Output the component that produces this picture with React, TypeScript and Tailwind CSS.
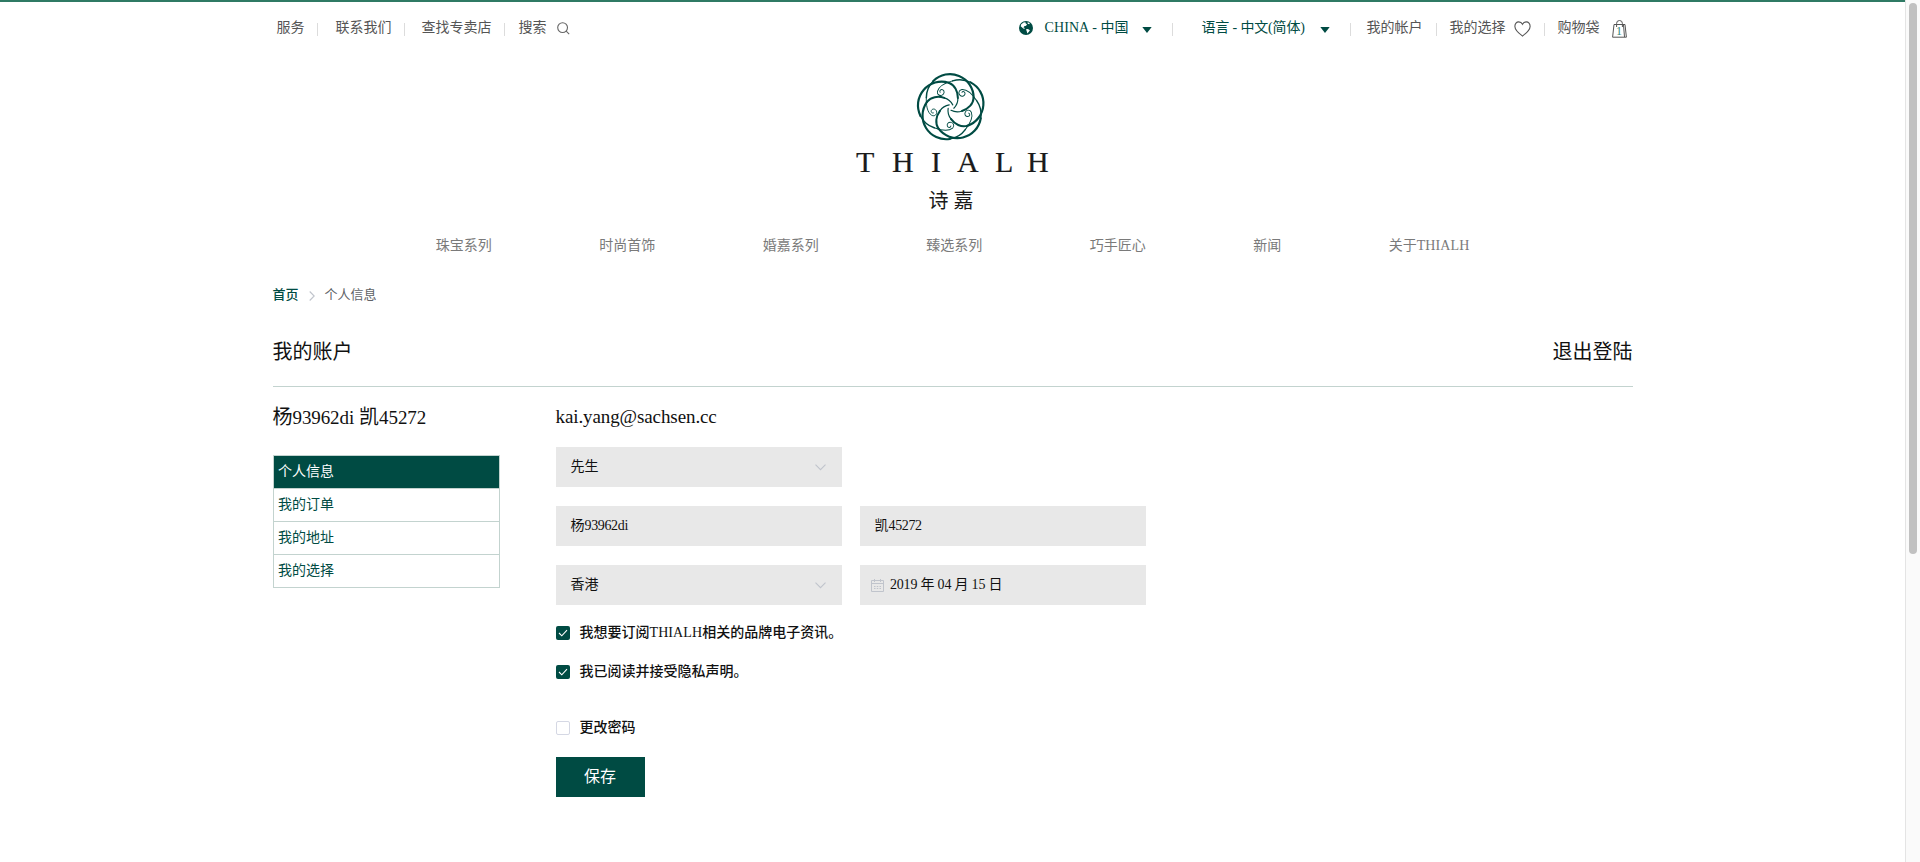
import React from "react";

const SERIF = "font-['Liberation_Serif','Noto_Sans_CJK_SC',serif]";

const navItems = ["珠宝系列", "时尚首饰", "婚嘉系列", "臻选系列", "巧手匠心", "新闻"];
const sideItems = ["个人信息", "我的订单", "我的地址", "我的选择"];
const petals = [0, 72, 144, 216, 288];

function Sep() {
  return <span className="mt-[3px] h-[13px] w-px shrink-0 bg-[#dcdcdc]" />;
}

function Caret() {
  return (
    <svg className="mt-[3px] h-[6px] w-[10px] shrink-0" viewBox="0 0 10 6">
      <path d="M.3 0h9.400L5 6z" fill="#004b43" />
    </svg>
  );
}

function Globe() {
  return (
    <svg className="-mt-px h-[14px] w-[14px] shrink-0" viewBox="0 0 14 14">
      <circle cx="7" cy="7" r="7" fill="#004b43" />
      <path d="M2.2 3.2 5 1.3l2 .4-.4 1.1 1.5.3-1 1.6-1.9.6-.7 1.2 1.4.6-.8 1-1.7-1.4-1.7-1.4zM8.6 1.2l2.2.8-.6 1.3-1.5-.6zM7 8.2l1.9-.3 2 1.3-1 1.5-1.5 1.8-.6-2z" fill="#fff" />
    </svg>
  );
}

function Logo() {
  return (
    <svg className="h-[140px] w-[200px]" viewBox="0 0 200 140">
      <g transform="translate(98 34.300) scale(0.3333)" fill="none" stroke="#004b43" strokeLinecap="round">
        {petals.map((a) => (
          <g key={a} transform={`rotate(${a})`}>
            <path
              d="M-74 -29 C-75 -8 -72 15 -58 24 C-48 29 -42 20 -43 14 C-44 6 -52 3 -57 7 C-62 11 -59 19 -53 17"
              strokeWidth="2.800"
            />
            <path d="M-74 -29 A71 71 0 0 1 -53 -79" strokeWidth="4.500" />
            <path d="M-53 -79 A71 71 0 0 1 68 -29" strokeWidth="6.500" />
            <path d="M68 -29 C67 -10 52 5 33 11" strokeWidth="6" />
            <path d="M33 11 C22 15 10 14 0 9" strokeWidth="3.500" />
          </g>
        ))}
      </g>
      <text
        x="3 39 78 104 142 174"
        y="99"
        fontSize="30"
        fill="#1a1a1a"
        stroke="#1a1a1a"
        strokeWidth="0.200"
        className="font-['Liberation_Serif',serif]"
      >
        THIALH
      </text>
      <text
        x="75.500 100.500"
        y="135"
        fontSize="20"
        fill="#1a1a1a"
        className="font-['Noto_Sans_CJK_SC',sans-serif]"
      >
        诗嘉
      </text>
    </svg>
  );
}

function TopBar() {
  return (
    <div className="flex h-[50px] w-full items-center pt-[2px] pl-1 text-sm leading-5 text-[#555]">
      <span className="w-[40px]">服务</span>
      <Sep />
      <span className="ml-[18px] w-[68px]">联系我们</span>
      <Sep />
      <span className="ml-[17px] w-[82px]">查找专卖店</span>
      <Sep />
      <span className="ml-[14px] w-[38px]">搜索</span>
      <svg className="h-[13px] w-[13px]" viewBox="0 0 13 13" fill="none" stroke="#666" strokeWidth="1.1">
        <circle cx="5.6" cy="5.6" r="4.9" />
        <path d="m9.2 9.2 3 3" />
      </svg>
      <div className="ml-auto flex items-center">
        <Globe />
        <span className="ml-[12px] w-[97px] whitespace-nowrap text-[#004b43]">
          <span className="tracking-[0.1px]">CHINA - </span>中国
        </span>
        <Caret />
        <span className="w-[20px]" />
        <Sep />
        <span className="ml-[29px] w-[118px] whitespace-nowrap tracking-[-0.15px] text-[#004b43]">语言 - 中文(简体)</span>
        <Caret />
        <span className="w-[20px]" />
        <Sep />
        <span className="ml-[16px] w-[69px]">我的帐户</span>
        <Sep />
        <span className="ml-[13px] w-[64px]">我的选择</span>
        <svg className="mt-px h-[16px] w-[17px]" viewBox="0 0 17 16" fill="none" stroke="#555" strokeWidth="1.1">
          <path d="M8.5 15C5.5 12.7 1 9.500 .9 5.400 .8 2.600 2.600 .9 4.700 .9 6.500 .9 7.800 1.900 8.500 3.300 9.200 1.900 10.500 .9 12.300 .9c2.100 0 3.900 1.700 3.800 4.500C16 9.500 11.500 12.700 8.500 15z" />
        </svg>
        <span className="w-[13px]" />
        <Sep />
        <span className="ml-[13px] w-[54px]">购物袋</span>
        <svg className="mt-px mr-[6px] h-[18px] w-[15px]" viewBox="0 0 15 18" fill="none" stroke="#555" strokeWidth="1">
          <path d="M2 4.500h11l1.400 12.700H.6zM4.600 7V3.400a2.900 2.900 0 0 1 5.800 0V7M11.500 5l1 12" />
          <text x="4" y="14.500" fontSize="12" fill="#2f8578" stroke="none" className={SERIF}>1</text>
        </svg>
      </div>
    </div>
  );
}

function Field({ children, arrow }: { children: React.ReactNode; arrow?: boolean }) {
  return (
    <div className="flex h-10 w-[286px] items-center justify-between bg-[#e8e8e8] px-[15px] text-sm text-[#111]">
      <span className="flex items-center">{children}</span>
      {arrow && (
        <svg className="mr-[1px] h-[7px] w-[11px]" viewBox="0 0 11 7" fill="none" stroke="#c0c4cc" strokeWidth="1.1">
          <path d="m.5.7 5 5 5-5" />
        </svg>
      )}
    </div>
  );
}

function Check({ label, checked }: { label: React.ReactNode; checked?: boolean }) {
  return (
    <label className="flex h-5 items-center gap-[10px] text-sm leading-5 font-medium text-[#111]">
      {checked ? (
        <span className="flex h-[14px] w-[14px] items-center justify-center rounded-[2px] bg-[#004b43]">
          <svg className="h-[10px] w-[10px]" viewBox="0 0 10 10" fill="none" stroke="#fff" strokeWidth="1.1">
            <path d="m1 5 2.800 2.800L9 2.200" />
          </svg>
        </span>
      ) : (
        <span className="h-[14px] w-[14px] rounded-[2px] border border-[#d5d8e4] bg-white" />
      )}
      <span>{label}</span>
    </label>
  );
}

export default function App() {
  return (
    <div className={`flex h-[862px] w-full overflow-hidden bg-white ${SERIF}`}>
      <div className="flex min-w-0 flex-1 flex-col items-center border-t-2 border-[#2f7a64]">
        <div className="w-[1360px]">
          <TopBar />
          <div className="flex justify-center pt-[21px]">
            <Logo />
          </div>
          <nav className="mt-[23px] flex h-5 justify-center gap-[107.5px] text-sm leading-5 text-[#7a7a7a]">
            {navItems.map((n) => (
              <span key={n}>{n}</span>
            ))}
            <span>
              关于<span className="tracking-[0.1px]">THIALH</span>
            </span>
          </nav>

          <div className="mt-[29px] flex h-5 items-center text-[13px] leading-5 text-[#606266]">
            <span className="font-medium text-[#004b43]">首页</span>
            <svg className="mt-[1px] mr-[10px] ml-[10px] h-[10px] w-[6px]" viewBox="0 0 6 10" fill="none" stroke="#c0c4cc" strokeWidth="1.1">
              <path d="m.7.5 4.500 4.500-4.500 4.500" />
            </svg>
            <span>个人信息</span>
          </div>

          <div className="mt-[21px] flex h-[61px] justify-between border-b border-[#c3d3cf] pt-[12px] text-xl text-[#111]">
            <h1>我的账户</h1>
            <span>退出登陆</span>
          </div>

          <div className="flex">
            <aside className="w-[283px] pt-[15px]">
              <h2 className="h-[28px] pt-px text-xl leading-[28px] text-[#111]">
                杨<span className="text-[19px] tracking-[-0.1px]">93962di</span> 凯
                <span className="text-[19px] tracking-[-0.1px]">45272</span>
              </h2>
              <ul className="mt-[25px] w-[227px] border-x border-t border-[#c3d3cf] text-sm">
                {sideItems.map((s, i) => (
                  <li
                    key={s}
                    className={
                      i === 0
                        ? "h-[33px] border-b border-[#c3d3cf] bg-[#004b43] pl-[4.5px] leading-[32px] text-white"
                        : "h-[33px] border-b border-[#c3d3cf] pl-[4.5px] leading-[32px] text-[#004b43]"
                    }
                  >
                    {s}
                  </li>
                ))}
              </ul>
            </aside>
            <main className="pt-[15px]">
              <h2 className="h-[28px] pt-px text-[19px] leading-[28px] tracking-[-0.1px] text-[#111]">kai.yang@sachsen.cc</h2>
              <div className="mt-[17px] grid grid-cols-2 gap-x-[18px] gap-y-[19px]">
                <div className="col-span-2">
                  <Field arrow>先生</Field>
                </div>
                <Field>
                  杨<span className="tracking-[-0.35px]">93962di</span>
                </Field>
                <Field>
                  凯<span className="tracking-[-0.35px]">45272</span>
                </Field>
                <Field arrow>香港</Field>
                <Field>
                  <svg className="mr-[6px] -ml-[3.5px] h-[13px] w-[13px]" viewBox="0 0 13 13" fill="none" stroke="#c0c4cc">
                    <path d="M.5 1.500h12v11H.5zM.5 4.500h12M3.500 0v3M9.500 0v3" />
                    <path d="M3 7.500h7M3 9.500h7" strokeDasharray="1.500 1.250" />
                  </svg>
                  <span className="tracking-[-0.2px]">2019 年 04 月 15 日</span>
                </Field>
              </div>
              <div className="mt-[18px] flex flex-col">
                <Check
                  checked
                  label={
                    <>
                      我想要订阅<span className="font-normal tracking-[0.1px]">THIALH</span>相关的品牌电子资讯。
                    </>
                  }
                />
                <div className="mt-[19px]">
                  <Check checked label="我已阅读并接受隐私声明。" />
                </div>
                <div className="mt-[36px]">
                  <Check label="更改密码" />
                </div>
              </div>
              <button className="mt-[19px] block h-10 w-[89px] bg-[#004b43] text-base text-white">保存</button>
            </main>
          </div>
        </div>
      </div>
      <div className="w-[15px] border-l border-[#e4e4e4] bg-[#fafafa] pt-[3px] pl-[3px]">
        <div className="h-[551px] w-[8px] rounded-full bg-[#c1c1c1]" />
      </div>
    </div>
  );
}
